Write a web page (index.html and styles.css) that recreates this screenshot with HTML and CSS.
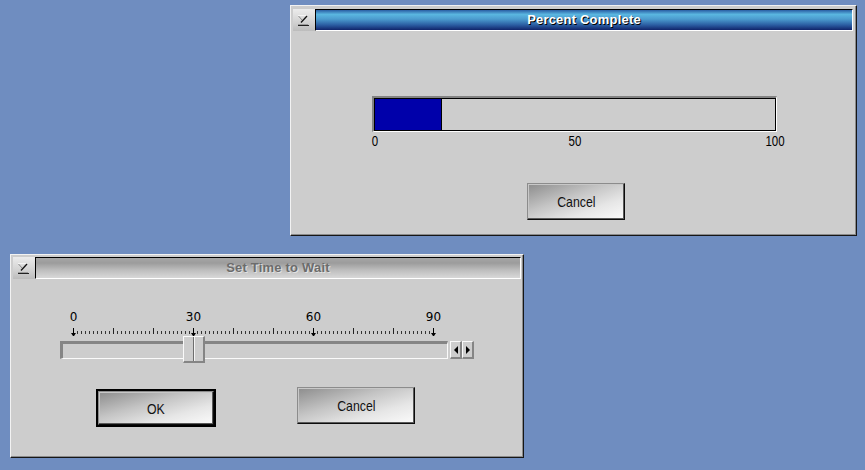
FILE: index.html
```html
<!DOCTYPE html>
<html>
<head>
<meta charset="utf-8">
<title>Dialogs</title>
<link rel="stylesheet" href="styles.css">
</head>
<body>
<div class="window win-progress">
  <div class="titlerow">
    <div class="tbtn">
      <svg width="22" height="22" viewBox="0 0 22 22">
        <path d="M5 6.5H14" stroke="#f4f4f4" stroke-width="1"/>
        <path d="M5.5 7L9 11" stroke="#8a8a8a" stroke-width="1"/>
        <path d="M14 7L8 13.5" stroke="#111" stroke-width="1.3"/>
        <path d="M5 16.5H16" stroke="#222" stroke-width="1"/>
        <path d="M5 15.5H15" stroke="#9a9a9a" stroke-width="1"/>
      </svg>
    </div>
    <div class="titlebar active">Percent Complete</div>
  </div>
  <div class="progress-body">
    <div class="pbar"><div class="ptrack"><div class="pfill" style="width:67px"></div></div></div>
    <div class="pscale">
      <span class="plabel" style="left:3px"><span class="narrow">0</span></span>
      <span class="plabel" style="left:203px"><span class="narrow">50</span></span>
      <span class="plabel" style="left:403px"><span class="narrow">100</span></span>
    </div>
    <button class="btn btn-progress"><span class="narrow">Cancel</span></button>
  </div>
</div>

<div class="window win-wait">
  <div class="titlerow">
    <div class="tbtn">
      <svg width="22" height="22" viewBox="0 0 22 22">
        <path d="M5 6.5H14" stroke="#f4f4f4" stroke-width="1"/>
        <path d="M5.5 7L9 11" stroke="#8a8a8a" stroke-width="1"/>
        <path d="M14 7L8 13.5" stroke="#111" stroke-width="1.3"/>
        <path d="M5 16.5H16" stroke="#222" stroke-width="1"/>
        <path d="M5 15.5H15" stroke="#9a9a9a" stroke-width="1"/>
      </svg>
    </div>
    <div class="titlebar inactive">Set Time to Wait</div>
  </div>
  <div class="wait-body">
    <div class="slider">
      <div class="slabels">
        <span class="slabel" style="left:0px">0</span>
        <span class="slabel" style="left:120px">30</span>
        <span class="slabel" style="left:240px">60</span>
        <span class="slabel" style="left:360px">90</span>
      </div>
      <div class="ticks">
        <span class="mark" style="left:0px"></span>
        <span class="mark" style="left:120px"></span>
        <span class="mark" style="left:240px"></span>
        <span class="mark" style="left:360px"></span>
      </div>
      <div class="track-row">
        <div class="trough">
          <div class="thumb" style="left:120px"></div>
        </div>
        <div class="arrows">
          <div class="abtn"><span class="tri tri-left"></span></div>
          <div class="abtn"><span class="tri tri-right"></span></div>
        </div>
      </div>
    </div>
    <div class="button-row">
      <div class="default-frame"><button class="btn btn-ok"><span class="narrow">OK</span></button></div>
      <button class="btn btn-cancel"><span class="narrow">Cancel</span></button>
    </div>
  </div>
</div>
</body>
</html>
```

FILE: styles.css
```css
html, body {
  margin: 0;
  padding: 0;
}

body {
  width: 865px;
  height: 470px;
  background: #6f8dc0;
  position: relative;
  overflow: hidden;
  font-family: "Liberation Sans", sans-serif;
}

.narrow {
  display: inline-block;
  transform: scaleX(0.82);
}

.window {
  position: absolute;
  box-sizing: border-box;
  background: #cdcdcd;
  border: 1px solid;
  border-color: #f2f2f2 #161616 #161616 #f2f2f2;
  box-shadow: inset -1px -1px 0 #8a8a8a;
  display: flex;
  flex-direction: column;
}

.win-progress {
  left: 290px;
  top: 5px;
  width: 567px;
  height: 231px;
  padding: 3px 3px 0 2px;
}

.win-wait {
  left: 10px;
  top: 254px;
  width: 514px;
  height: 204px;
  padding: 2px 2px 0 2px;
}

.titlerow {
  display: flex;
  height: 22px;
}

.tbtn {
  width: 22px;
  height: 22px;
  background: linear-gradient(#ececec, #d2d2d2 60%, #bcbcbc);
}

.tbtn svg {
  display: block;
}

.titlebar {
  flex: 1;
  box-sizing: border-box;
  border: 1px solid;
  border-color: #000 #fff #fff #000;
  font-family: "Liberation Sans", sans-serif;
  font-weight: bold;
  font-size: 13px;
  letter-spacing: 0.2px;
  line-height: 19px;
  text-align: center;
}

.active {
  background: linear-gradient(#2a5ea4 0%, #5ab6e0 22%, #4c9ccf 45%, #2b5da2 75%, #10246a 100%);
  color: #fff;
  text-shadow: 1px 1px 0 #000;
}

.inactive {
  background: linear-gradient(#a6a6a6 0%, #9c9c9c 25%, #bdbdbd 60%, #d8d8d8 100%);
  color: #6c6c6c;
  text-shadow: 1px 1px 0 #e2e2e2;
}

/* progress window */
.progress-body {
  display: flex;
  flex-direction: column;
  align-items: flex-start;
}

.pbar {
  margin-top: 65px;
  margin-left: 79px;
  box-sizing: border-box;
  width: 405px;
  height: 36px;
  border-style: solid;
  border-width: 2px 1px 1px 2px;
  border-color: #838383 #fff #fff #838383;
}

.ptrack {
  box-sizing: border-box;
  height: 100%;
  border: 1px solid #000;
  background: #cdcdcd;
}

.pfill {
  box-sizing: border-box;
  height: 100%;
  background: #0000aa;
  border-right: 1px solid #000;
}

.pscale {
  position: relative;
  margin-left: 79px;
  margin-top: 2px;
  width: 405px;
  height: 14px;
}

.plabel {
  position: absolute;
  top: 0;
  font-size: 14px;
  line-height: 14px;
  color: #000;
  transform: translateX(-50%);
}

.btn {
  box-sizing: border-box;
  margin: 0;
  padding: 0;
  border: 1px solid;
  border-color: #8c8c8c #0c0c0c #0c0c0c #8c8c8c;
  box-shadow: inset -1px -1px 0 #5a5a5a, inset 1px 1px 0 #c8c8c8;
  background: linear-gradient(to bottom right, #8c8c8c 0%, #c4c4c4 40%, #e6e6e6 70%, #fbfbfb 100%);
  font-family: "Liberation Sans", sans-serif;
  font-size: 15px;
  color: #111;
  text-align: center;
}

.btn-progress {
  margin-top: 35px;
  margin-left: 234px;
  width: 98px;
  height: 37px;
}

/* wait window */
.wait-body {
  display: flex;
  flex-direction: column;
  align-items: flex-start;
}

.slider {
  margin-left: 47px;
  margin-top: 31px;
}

.slabels {
  position: relative;
  margin-left: 13px;
  width: 361px;
  height: 14px;
}

.slabel {
  position: absolute;
  top: 0;
  font-family: "DejaVu Sans", sans-serif;
  font-size: 12px;
  line-height: 14px;
  color: #000;
  transform: translateX(-50%);
  margin-left: 0.5px;
}

.ticks {
  position: relative;
  margin-top: 4px;
  margin-left: 13px;
  width: 361px;
  height: 8px;
  background:
    repeating-linear-gradient(to right, #222 0 1px, transparent 1px 40px) 0 0 / 100% 6px no-repeat,
    repeating-linear-gradient(to right, #333 0 1px, transparent 1px 4px) 0 3px / 100% 3px no-repeat;
}

.mark {
  position: absolute;
  top: 0;
  width: 1px;
  height: 5px;
  background: #000;
}

.mark::after {
  content: "";
  position: absolute;
  left: -2px;
  top: 5px;
  width: 1px;
  height: 0;
  border-left: 2px solid transparent;
  border-right: 2px solid transparent;
  border-top: 3px solid #000;
}

.track-row {
  display: flex;
  margin-top: 5px;
}

.trough {
  position: relative;
  box-sizing: border-box;
  width: 388px;
  height: 18px;
  border-style: solid;
  border-width: 3px 1px 1px 3px;
  border-color: #858585 #fafafa #fafafa #858585;
  background: #cdcdcd;
}

.thumb {
  position: absolute;
  top: -8px;
  box-sizing: border-box;
  width: 22px;
  height: 27px;
  border-style: solid;
  border-width: 1px 2px 2px 1px;
  border-color: #fafafa #858585 #858585 #fafafa;
  background: #cdcdcd;
}

.thumb::after {
  content: "";
  position: absolute;
  left: 9px;
  top: 0;
  bottom: 0;
  width: 1px;
  background: #6e6e6e;
  box-shadow: 1px 0 0 #f4f4f4;
}

.arrows {
  display: flex;
  margin-left: 2px;
}

.abtn {
  box-sizing: border-box;
  width: 12px;
  height: 18px;
  border-style: solid;
  border-width: 1px 2px 2px 1px;
  border-color: #fafafa #858585 #858585 #fafafa;
  background: #cdcdcd;
  display: flex;
  align-items: center;
  justify-content: center;
}

.tri {
  width: 0;
  height: 0;
  border-top: 4px solid transparent;
  border-bottom: 4px solid transparent;
}

.tri-left {
  border-right: 4px solid #000;
}

.tri-right {
  border-left: 4px solid #000;
}

.button-row {
  display: flex;
  align-items: flex-start;
  margin-top: 28px;
}

.default-frame {
  margin-left: 83px;
  margin-top: 2px;
  border: 2px solid #000;
  display: flex;
}

.btn-ok {
  width: 116px;
  height: 34px;
}

.btn-cancel {
  margin-left: 81px;
  width: 118px;
  height: 37px;
}
```
